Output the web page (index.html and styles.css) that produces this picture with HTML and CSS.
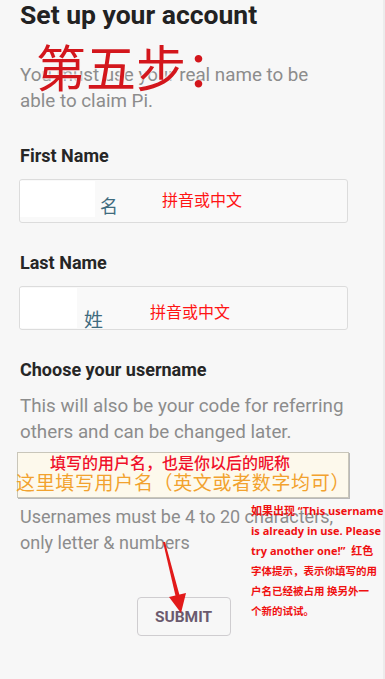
FILE: index.html
```html
<!DOCTYPE html>
<html lang="zh-CN">
<head>
<meta charset="utf-8">
<title>Set up your account</title>
<link rel="stylesheet" href="styles.css">
</head>
<body>
<main class="page">
  <h1 class="title">Set up your account</h1>
  <p class="desc intro">You must use your real name to be able to claim Pi.</p>
  <span class="step">第五步：</span>

  <label class="label first">First Name</label>
  <div class="input input-first">
    <span class="blank blank-first"></span>
    <span class="hint-char char-first">名</span>
    <span class="note note-first">拼音或中文</span>
  </div>

  <label class="label">Last Name</label>
  <div class="input input-last">
    <span class="blank blank-last"></span>
    <span class="hint-char char-last">姓</span>
    <span class="note note-last">拼音或中文</span>
  </div>

  <label class="label">Choose your username</label>
  <p class="desc help">This will also be your code for referring others and can be changed later.</p>

  <div class="userbox">
    <span class="user-note">填写的用户名，也是你以后的昵称</span>
    <span class="user-hint">这里填写用户名（英文或者数字均可）</span>
  </div>

  <p class="desc rules">Usernames must be 4 to 20 characters, only letter &amp; numbers</p>

  <button class="submit" type="button">SUBMIT</button>

  <div class="annotation">如果出现 “This username<br>is already in use. Please<br>try another one!”&nbsp; 红色<br><span class="cjk">字体提示，表示你填写的用</span><br><span class="cjk">户名已经被占用 换另外一</span><br><span class="cjk">个新的试试。</span></div>

  <svg class="arrow" width="34" height="80" viewBox="0 0 34 80" aria-hidden="true">
    <path d="M4 3 L6 3 L21 58 L17 59 Z" fill="#e21a1a"/>
    <polygon points="10,58 27,54 22,74" fill="#e21a1a"/>
  </svg>
</main>
</body>
</html>
```

FILE: styles.css
```css
html, body {
  margin: 0;
  padding: 0;
}

body {
  width: 385px;
  min-height: 679px;
  background: #f7f7f7;
  box-shadow: inset -2px 0 0 #ececec;
  font-family: Roboto, "Liberation Sans", "Noto Sans CJK SC", sans-serif;
  overflow: hidden;
}

.page {
  position: relative;
  padding: 0 0 0 19px;
  width: 329px;
  display: flex;
  flex-direction: column;
}

.title {
  margin: 0;
  padding-left: 1px;
  font-size: 26.5px;
  line-height: 30px;
  font-weight: 700;
  color: #222222;
}

.desc {
  margin: 0;
  padding-left: 1px;
  font-size: 18px;
  line-height: 26px;
  color: #8c8c8c;
}

.intro {
  margin-top: 32px;
  width: 320px;
  font-size: 18.8px;
}

.step {
  position: absolute;
  left: 36px;
  top: 40px;
  font-family: "Noto Sans CJK SC", sans-serif;
  font-size: 50px;
  line-height: 50px;
  color: #d3161c;
  text-shadow: 0 0 2px #f7f7f7, 0 0 3px #f7f7f7, 0 0 3px #f7f7f7;
}

.label {
  display: block;
  margin: 29px 0 12px;
  padding-left: 1px;
  font-size: 18px;
  line-height: 22px;
  font-weight: 700;
  color: #262626;
}

.label.first {
  margin-top: 31px;
}

.input {
  box-sizing: border-box;
  height: 44px;
  border: 1px solid #dcdcdc;
  border-radius: 3px;
  background: #f9f9f9;
  display: flex;
  align-items: center;
}

.input-first {
  padding: 1px 0 5px;
}

.input-last {
  padding: 1px 0 1px;
}

.blank {
  align-self: stretch;
  background: #ffffff;
}

.blank-first {
  width: 75px;
}

.blank-last {
  width: 57px;
}

.hint-char {
  font-family: "Noto Sans CJK SC", sans-serif;
  line-height: 1;
  color: #3f6b7e;
  align-self: flex-end;
}

.char-first {
  font-size: 18px;
  margin-left: 5px;
  margin-bottom: 3px;
}

.char-last {
  font-size: 19px;
  margin-left: 7px;
}

.note {
  font-family: "Noto Sans CJK SC", sans-serif;
  font-size: 16px;
  line-height: 1;
  color: #ff1414;
}

.note-first {
  margin-left: 44px;
}

.note-last {
  margin-left: 47px;
  margin-top: 5px;
}

.help {
  margin-top: 0;
  font-size: 18.8px;
  width: 330px;
}

.userbox {
  box-sizing: border-box;
  margin-top: 7px;
  height: 46px;
  margin-left: -2px;
  width: 332px;
  border: 1px solid #c9c6ba;
  background: #fdf9ec;
  box-shadow: 1px 1px 0 #b9b9b9;
  display: flex;
  flex-direction: column;
  align-items: flex-start;
  font-family: "Noto Sans CJK SC", sans-serif;
  white-space: nowrap;
}

.user-note {
  margin-left: 32px;
  font-size: 16px;
  line-height: 18px;
  font-weight: 500;
  color: #f0102a;
}

.user-hint {
  margin-left: -2px;
  font-size: 19px;
  line-height: 22px;
  letter-spacing: 0.65px;
  color: #f2a22e;
}

.rules {
  margin-top: 6px;
}

.submit {
  display: block;
  box-sizing: border-box;
  align-self: center;
  margin-top: 41px;
  width: 94px;
  height: 39px;
  padding: 0;
  border: 1px solid #cfcdd0;
  border-radius: 4px;
  background: transparent;
  font-family: Roboto, "Liberation Sans", sans-serif;
  font-size: 15.5px;
  font-weight: 700;
  color: #6b5a6e;
}

.annotation {
  position: absolute;
  left: 251px;
  top: 501px;
  font-family: "Open Sans", "Noto Sans CJK SC", sans-serif;
  font-size: 11px;
  line-height: 20px;
  font-weight: 700;
  color: #f01010;
  white-space: nowrap;
}

.annotation .cjk {
  font-family: "Noto Sans CJK SC", sans-serif;
  font-size: 10.5px;
}

.arrow {
  position: absolute;
  left: 159px;
  top: 539px;
}
```
